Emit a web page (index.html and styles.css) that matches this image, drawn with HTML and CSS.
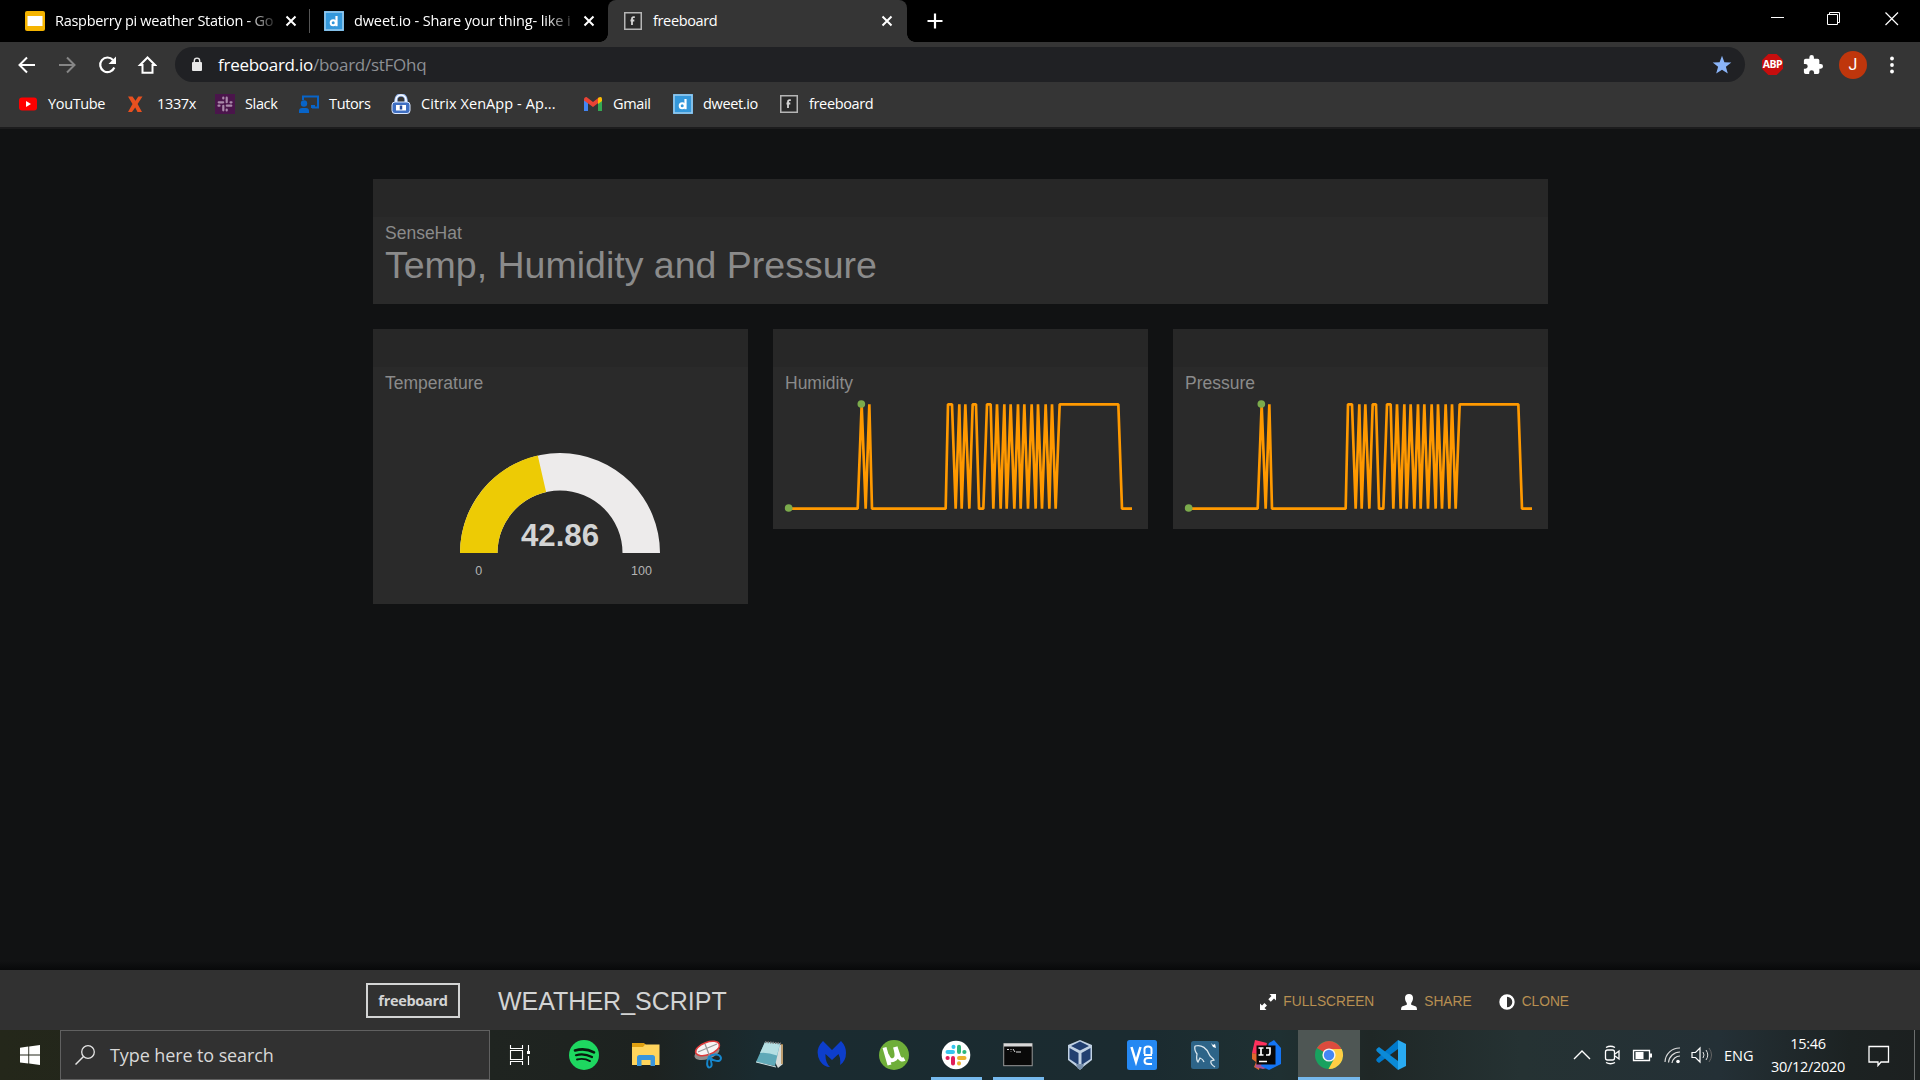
FILE: index.html
```html
<!DOCTYPE html>
<html lang="en">
<head>
<meta charset="utf-8">
<title>freeboard</title>
<link rel="stylesheet" href="styles.css">
</head>
<body>
<svg class="defs" aria-hidden="true">
  <symbol id="x" viewBox="0 0 12 12"><path d="M1.500 1.500l9 9M10.500 1.500l-9 9" stroke="#fff" stroke-width="2"/></symbol>
  <symbol id="fb" viewBox="0 0 18 18"><rect x=".75" y=".75" width="16.500" height="16.500" fill="#2a2a2a" stroke="#b5b5b5" stroke-width="1.500"/><path d="M8 13V7Q8 5.200 9.500 5.200h1.300M6.500 8.500h3.800" stroke="#d5d5d5" stroke-width="1.800" fill="none"/></symbol>
  <symbol id="dw" viewBox="0 0 20 20"><rect width="20" height="20" fill="#3498db"/><rect x="1" y="1" width="18" height="18" fill="none" stroke="#9dcbed" stroke-width="1.500"/><circle cx="9.200" cy="11.700" r="2.500" fill="none" stroke="#fff" stroke-width="2"/><path d="M12.500 5v10.200" stroke="#fff" stroke-width="2.200"/></symbol>
  <symbol id="spark" viewBox="0 0 1125 405"><g transform="translate(-39 -222)"><path d="M86 566H293L305 253 317 566 328 253 336 566H557L564 253H576L587 566 598 253 605 566 616 253 628 566 638 253H648L657 566H670L681 253H692L700 566 711 253 722 566 733 253 740 566 752 253 763 566 774 253 782 566 793 253 804 566 815 253 827 566 834 253 846 566 857 253 868 566 876 253 887 566 899 253H1075L1086 566H1116" fill="none" stroke="#ff9900" stroke-width="8" stroke-linejoin="bevel"/><circle cx="304" cy="252" r="11.500" fill="#7bab4c"/><circle cx="86" cy="564" r="11.500" fill="#7bab4c"/></g></symbol>
</svg>

<header class="browser">
  <div class="tabstrip">
    <div class="tab tab-one">
      <svg class="i20" viewBox="0 0 20 20"><rect width="20" height="20" rx="2" fill="#f5b400"/><rect x="2.500" y="5" width="15" height="10" fill="#fff"/></svg>
      <span class="title">Raspberry pi weather Station - Go</span>
      <svg class="close"><use href="#x"/></svg>
    </div>
    <div class="tab tab-two">
      <svg class="i20"><use href="#dw"/></svg>
      <span class="title">dweet.io - Share your thing- like i</span>
      <svg class="close"><use href="#x"/></svg>
    </div>
    <div class="tab active">
      <svg class="i18"><use href="#fb"/></svg>
      <span class="title">freeboard</span>
      <svg class="close"><use href="#x"/></svg>
    </div>
    <svg class="plus" viewBox="0 0 16 16"><path d="M8 .5v15M.5 8h15" stroke="#fff" stroke-width="2.200"/></svg>
    <div class="window-controls">
      <svg viewBox="0 0 14 14"><path d="M0 5.500h13" stroke="#fff"/></svg>
      <svg viewBox="0 0 14 14"><path d="M.5 2.500h10v10H.5zM2.500 2V.5h10v10H11" fill="none" stroke="#fff"/></svg>
      <svg viewBox="0 0 14 14"><path d="M.5.5l12.500 12.500M13 .5L.5 13" stroke="#fff" stroke-width="1.200"/></svg>
    </div>
  </div>
  <div class="toolbar">
    <div class="nav">
      <svg viewBox="0 0 20 20"><path d="M18 10H3M10 2.500L2.500 10l7.500 7.500" fill="none" stroke="#fff" stroke-width="2"/></svg>
      <svg viewBox="0 0 20 20"><path d="M2 10h15M10 2.500l7.500 7.500-7.500 7.500" fill="none" stroke="#868686" stroke-width="2"/></svg>
      <svg viewBox="0 0 20 20"><path d="M17.300 12.500A7.300 7.300 0 1 1 16 5" fill="none" stroke="#fff" stroke-width="2.200"/><path d="M19 1.500v7.500h-7.500z" fill="#fff"/></svg>
      <svg viewBox="0 0 20 20"><path d="M10.500 2.500L3 10h2.500v7.800h10V10H18z" fill="none" stroke="#fff" stroke-width="2"/></svg>
    </div>
    <div class="omnibox">
      <svg class="lock" viewBox="0 0 12 15"><rect x="1" y="5" width="10" height="9" rx="1" fill="#e8e8e8"/><path d="M3.300 6V3.800a2.700 2.700 0 0 1 5.400 0V6" fill="none" stroke="#e8e8e8" stroke-width="1.400"/></svg>
      <span class="url">freeboard.io<i>/board/stFOhq</i></span>
      <svg class="i20 star" viewBox="0 0 20 20"><path d="M10 .8l2.400 6.400 6.900.3-5.400 4.300 1.900 6.700L10 14.700l-5.800 3.800 1.900-6.700L.7 7.500l6.900-.3z" fill="#8ab4f8"/></svg>
    </div>
    <div class="extensions">
      <span class="abp">ABP</span>
      <svg class="i20" viewBox="1 1 22 22"><path d="M20.500 11H19V7a2 2 0 0 0-2-2h-4V3.500a2.500 2.500 0 0 0-5 0V5H4a2 2 0 0 0-2 2v3.800h1.500a2.700 2.700 0 0 1 0 5.400H2V20a2 2 0 0 0 2 2h3.800v-1.500a2.700 2.700 0 0 1 5.400 0V22H17a2 2 0 0 0 2-2v-4h1.500a2.500 2.500 0 0 0 0-5z" fill="#fff"/></svg>
      <span class="avatar">J</span>
      <svg class="i20" viewBox="0 0 20 20"><g fill="#fff"><circle cx="10" cy="3.500" r="1.900"/><circle cx="10" cy="10" r="1.900"/><circle cx="10" cy="16.500" r="1.900"/></g></svg>
    </div>
  </div>
  <nav class="bookmarks">
    <a><svg viewBox="0 0 20 20"><rect x="1" y="3.500" width="18" height="13" rx="3" fill="#f00"/><path d="M8 7l5 3-5 3z" fill="#fff"/></svg>YouTube</a>
    <a><svg viewBox="0 0 20 20"><path d="M1 2.500h4.500l3 4.200 2.800-4.200H15.500L10.600 10l4.400 8h-4.500l-2.300-4.500L5 18H1l4.500-8z" fill="#e8501f"/></svg>1337x</a>
    <a><svg viewBox="0 0 20 20"><rect width="20" height="20" fill="#4a154b"/><g stroke="#a98aaa" stroke-width="2.200" stroke-linecap="round"><path d="M3.700 8.300h4.500M8.300 3.500v1M11.700 3.700v4.500M16.500 8.300h-1M16.300 11.700h-4.500M11.700 16.500v-1M8.300 16.300v-4.500M3.500 11.700h1"/></g></svg>Slack</a>
    <a><svg viewBox="0 0 20 20"><path d="M4 6V2.500h15v11h-6" fill="none" stroke="#0864c8" stroke-width="2"/><circle cx="5" cy="9.500" r="3.200" fill="#0864c8"/><path d="M0 19v-2q0-3 3-3h4q3 0 3 3v2z" fill="#0864c8"/><path d="M12 11h4v3h-4z" fill="#0864c8"/></svg>Tutors</a>
    <a class="citrix"><svg viewBox="0 0 20 20"><path d="M5 9V6a5 5 0 0 1 10 0v3" fill="none" stroke="#8eaee4" stroke-width="3.500"/><path d="M5 9V6a5 5 0 0 1 10 0v3" fill="none" stroke="#fff" stroke-width="1.600"/><rect x="1" y="8" width="18" height="11.500" rx="3" fill="#3f6fc2" stroke="#dbe8ff"/><path d="M5 11h10v5.500H5z" fill="#fff"/><path d="M10 11.500v4" stroke="#244a9b" stroke-width="2.500"/></svg>Citrix XenApp - Ap...</a>
    <a><svg viewBox="0 0 20 20"><path d="M1 5v12h4V9z" fill="#4285f4"/><path d="M15 9v8h4V5z" fill="#34a853"/><path d="M1 5.500Q1 3 3.500 3L10 8l6.500-5v5L10 13 1 6.500z" fill="#ea4335"/><path d="M15 4q4-2.500 4 1v2l-4 3z" fill="#fbbc04"/></svg>Gmail</a>
    <a><svg><use href="#dw"/></svg>dweet.io</a>
    <a><svg class="small"><use href="#fb"/></svg>freeboard</a>
  </nav>
</header>

<main class="board">
  <section class="panel wide">
    <div class="panel-head"></div>
    <h2>SenseHat</h2>
    <p class="headline">Temp, Humidity and Pressure</p>
  </section>
  <section class="panel tall">
    <div class="panel-head"></div>
    <h2>Temperature</h2>
    <svg class="gauge" viewBox="0 0 375 180">
      <path d="M87 119A100 100 0 0 1 287 119H249.500A62.500 62.500 0 0 0 124.500 119z" fill="#edebeb"/>
      <path d="M87 119A100 100 0 0 1 164.760 21.500L173.100 58.060A62.500 62.500 0 0 0 124.500 119z" fill="#edcb05"/>
      <text x="187" y="112" class="gauge-value">42.86</text>
      <text x="105.700" y="141" class="gauge-limit">0</text>
      <text x="268.500" y="141" class="gauge-limit">100</text>
    </svg>
  </section>
  <section class="panel chart">
    <div class="panel-head"></div>
    <h2>Humidity</h2>
    <svg class="spark"><use href="#spark"/></svg>
  </section>
  <section class="panel chart">
    <div class="panel-head"></div>
    <h2>Pressure</h2>
    <svg class="spark"><use href="#spark"/></svg>
  </section>
</main>

<footer class="board-bar">
  <span class="logo">freeboard</span>
  <h1>WEATHER_SCRIPT</h1>
  <div class="actions">
    <a><svg viewBox="0 0 16 16"><path d="M9.500 0H16v6.500l-2-2-3.200 3.200-2.500-2.500L11.500 2zM0 9.500l2 2 2.500-2.500L7 11.500 4.500 14l2 2H0z" fill="#fff"/></svg>FULLSCREEN</a>
    <a><svg viewBox="0 0 16 16"><path d="M8 0C5.500 0 4 1.500 4 4c0 2 .7 3.800 1.800 5v1.800L1 12.500Q0 13 0 16h16q0-3-1-3.500l-4.800-1.700V9C11.300 7.800 12 6 12 4c0-2.500-1.500-4-4-4z" fill="#fff"/></svg>SHARE</a>
    <a><svg viewBox="0 0 16 16"><circle cx="8" cy="8" r="6.500" fill="none" stroke="#fff" stroke-width="2.400"/><path d="M8 2v12A6 6 0 0 1 8 2z" fill="#fff"/></svg>CLONE</a>
  </div>
</footer>

<div class="taskbar">
  <div class="start"><svg viewBox="0 0 20 20"><path d="M0 2.700L8.300 1.500v8H0zM9.200 1.400L20 0v9.500H9.200zM0 10.500h8.300v8L0 17.400zM9.200 10.500H20V20L9.200 18.600z" fill="#fff"/></svg></div>
  <div class="search"><svg viewBox="0 0 20 20"><circle cx="13" cy="7" r="6.300" fill="none" stroke="#e5e5e5" stroke-width="1.300"/><path d="M8.500 11.500L.5 19.500" stroke="#e5e5e5" stroke-width="1.500"/></svg><span>Type here to search</span></div>
  <div class="apps">
    <div><svg viewBox="0 0 30 30"><path d="M5.500 5v3.500h12V5M5.500 10.500h12v9h-12zM5.500 25v-3.500h12V25M23.500 5v6M23.500 16v9" fill="none" stroke="#fff" stroke-width="1.100"/><path d="M22 11h3v3h-3z" fill="#fff"/></svg></div>
    <div class="nudge"><svg viewBox="0 0 30 30"><circle cx="15" cy="15" r="15" fill="#1ed760"/><g fill="none" stroke="#08180d" stroke-linecap="round"><path d="M6 10.500q10-3 19 1.800" stroke-width="2.600"/><path d="M7 15.200q8-2.300 16 1.800" stroke-width="2.200"/><path d="M8 19.500q7-1.700 13 1.600" stroke-width="1.900"/></g></svg></div>
    <div class="nudge"><svg viewBox="0 0 30 30"><path d="M1 3h12l2 2h-1l-1 3H1z" fill="#e0a010"/><path d="M1 7h11l2-2.500h14.500V25H1z" fill="#ffd45c"/><path d="M6 26V17.500Q6 15 8.500 15h13q2.500 0 2.500 2.500V26h-4.500v-6h-9v6z" fill="#3995dc"/></svg></div>
    <div class="nudge"><svg viewBox="0 0 30 30"><ellipse cx="14" cy="13" rx="13" ry="6" transform="rotate(-18 14 13)" fill="#8d8d8d"/><ellipse cx="14.500" cy="8.500" rx="12.500" ry="6.200" transform="rotate(-20 14.500 8.500)" fill="#f7f4f4" stroke="#df3a3a" stroke-width="1.500"/><path d="M12 4l5 13M5 12l19-8" stroke="#999" stroke-width="1.300"/><path d="M16 17c-3 5-2 10 0 10.500 4 0 3-6 0-10.500zm0 0c4-4 11-3 12 1 0 5-8 3-12-1z" fill="none" stroke="#1687cd" stroke-width="2"/></svg></div>
    <div><svg viewBox="0 0 30 30"><path d="M10 2l18 3v19l-5 4z" fill="#d7dcd9"/><path d="M10 2l15 1.500-5 22.500-19-4z" fill="#5fa9b8"/><path d="M10 2l15 1.500-3 12Q12 12 5 13z" fill="#b5dfe3"/><path d="M27 4v20" stroke="#b58a4c" stroke-width="1.500"/><path d="M1 22l20 5" stroke="#d0e5e7"/><path d="M10 2l16 1.500" stroke="#777" stroke-width="2" stroke-dasharray="1.500 1"/></svg></div>
    <div><svg viewBox="0 0 30 30"><path d="M6 1l9 9 9-9q5 5 5 12 0 8-6 12 1-6-1.500-11L15 20l-6.500-6Q8 22 13 27q-6 0-10-6Q-3 10 6 1z" fill="#0d3ecc"/></svg></div>
    <div><svg viewBox="0 0 30 30"><circle cx="15" cy="15" r="15" fill="#6fae39"/><path d="M5.500 7.500l5 17.500M8 15q3 8 8 4 3-2 0-12M16.500 7l3 9q2 5 6 3" fill="none" stroke="#fff" stroke-width="4"/></svg></div>
    <div class="running"><svg viewBox="0 0 30 30"><circle cx="15" cy="15" r="14.300" fill="#fff"/><g stroke-width="4" stroke-linecap="round"><path d="M6.500 12H12M12.500 6.800v.2" stroke="#36c5f0"/><path d="M18 6.800V12M23.500 12h-.2" stroke="#2eb67d"/><path d="M12 18v5.500M6.500 18h.2" stroke="#e01e5a"/><path d="M18 18h5.500M18 23.500v-.2" stroke="#ecb22e"/></g></svg></div>
    <div class="running"><svg viewBox="0 0 30 30"><rect x=".7" y="3.700" width="28.500" height="22" fill="#090909" stroke="#999"/><path d="M1 5h28" stroke="#d8d8d8" stroke-width="3"/><path d="M4 9.500h2M8 9v1M8 11.500v.5M10 9l2 3M13 12h5" stroke="#ddd"/></svg></div>
    <div><svg viewBox="0 0 30 30"><path d="M15 0l12 5v15l-9 7-3 3-3-3-9-7V5z" fill="#c0d1e3"/><path d="M15 1.500L24 6l-9 4.500L6 6z" fill="#213f70"/><path d="M4.500 8L13.500 13v12l-9-6z" fill="#213f70"/><path d="M25.500 8L16.500 13v12l9-6z" fill="#213f70"/><path d="M11 24h8l-2 5h-4z" fill="#7890ac"/></svg></div>
    <div><svg viewBox="0 0 30 30"><rect width="30" height="30" rx="2.500" fill="#2588f2"/><path d="M4.500 7l4.500 15 4.500-15" fill="none" stroke="#fff" stroke-width="2.500"/><path d="M17.500 14V9q0-2.500 3.500-2.500T24.500 9v5M17 15h8M25 18h-4q-3.500 0-3.500 3t3.500 3h4" fill="none" stroke="#fff" stroke-width="2"/></svg></div>
    <div><svg viewBox="0 0 30 30"><rect x="1" y="1" width="28" height="28" rx="2.500" fill="#2d6488"/><path d="M5 6c7-2 12 3 14 8 1 3 4 4 5 6l-3 1q-1 3 4 6M5 6q-1 4 2 8-1 6 1 8l2-4q3 1 4 4" fill="none" stroke="#d8e5ec" stroke-width="1.300"/><path d="M21 3l2 2 2-1 1 4-3-1z" fill="#fff"/></svg></div>
    <div><svg viewBox="0 0 30 30"><path d="M3 0l12 3-3 13-12-3z" fill="#fe315d"/><path d="M0 13l10 2-3 15-5-3 2-5-4-3z" fill="#e1682c"/><path d="M3 27l3-7 13 7-8 2z" fill="#a6529a"/><path d="M17 3l5-3 7 8v16l-12 6-8-4z" fill="#1475f4"/><rect x="4.500" y="5.500" width="19" height="19" fill="#080808"/><path d="M6.500 8h5M9 8v7M6.500 15h5M14 8h4v5q0 2-2 2h-2M7 21.500h8" fill="none" stroke="#fff" stroke-width="1.700"/></svg></div>
    <div class="running current"><svg viewBox="0 0 30 30"><circle cx="15" cy="15" r="14" fill="#19a15f"/><path d="M15 15L2.900 8A14 14 0 0 1 27.100 8L27 9H15z" fill="#dc4b3e"/><path d="M15 9h12.700A14 14 0 0 1 14.500 29L20.500 18z" fill="#ffce44"/><circle cx="15" cy="15" r="6.600" fill="#f4f4f4"/><circle cx="15" cy="15" r="5.200" fill="#4486f4"/></svg></div>
    <div><svg viewBox="0 0 30 30"><path d="M22 0L1 18.500Q-.5 20 1 21.500l2 1.500L22 9z" fill="#007acc"/><path d="M22 30L1 11.500Q-.5 10 1 8.500L3 7l19 14z" fill="#0b8ad7"/><path d="M22 0l8 4v22l-8 4z" fill="#29aaf2"/></svg></div>
  </div>
  <div class="tray">
    <svg viewBox="0 0 22 22"><path d="M3 15l8-8 8 8" fill="none" stroke="#fff" stroke-width="1.400"/></svg>
    <svg viewBox="0 0 22 22"><rect x="4.500" y="6" width="9" height="10" rx="2" fill="none" stroke="#fff" stroke-width="1.300"/><path d="M14 10l4-3v8l-4-3M5 3.500q4.500-2.500 9 0M5 18.500q4.500 2.500 9 0" fill="none" stroke="#fff" stroke-width="1.300"/></svg>
    <svg viewBox="0 0 22 22"><path d="M2.500 6.500h16v10h-16z" fill="none" stroke="#fff" stroke-width="1.300"/><path d="M4.500 8h8v7h-8zM19 9.500h2v4h-2z" fill="#fff"/></svg>
    <svg viewBox="0 0 22 22"><g fill="none" stroke="#ddd" stroke-width="1.200"><path d="M4 18A14.500 14.500 0 0 1 19 4M7.500 18.500A11.500 11.500 0 0 1 19 8M11 19a8 8 0 0 1 8-7"/></g><circle cx="17" cy="17.500" r="1.800" fill="#fff"/></svg>
    <svg viewBox="0 0 22 22"><path d="M1 8.500h3.500L9 4v14l-4.500-4.500H1z" fill="none" stroke="#fff" stroke-width="1.200"/><path d="M12 8q2 3 0 6M15 6q3.500 5 0 10" fill="none" stroke="#ddd"/><path d="M18 4q5 7 0 14" fill="none" stroke="#666"/></svg>
    <span class="lang">ENG</span>
  </div>
  <div class="clock"><span>15:46</span><span>30/12/2020</span></div>
  <svg class="notice" viewBox="0 0 22 22"><path d="M1 1.500h19.500v15.500H13l-3 3.500V17H1z" fill="none" stroke="#fff" stroke-width="1.300"/></svg>
  <div class="peek"></div>
</div>
</body>
</html>
```
FILE: styles.css
```css
* { box-sizing: border-box; }
body {
  margin: 0;
  width: 1920px;
  height: 1080px;
  overflow: hidden;
  display: flex;
  flex-direction: column;
  background: #111213;
  color: #fff;
  font-family: "Open Sans", "Noto Sans", sans-serif;
}
svg { display: block; flex: none; }
h1, h2, p { margin: 0; font-weight: 400; }
.defs { position: absolute; width: 0; height: 0; }
.i20 { width: 20px; height: 20px; }
.i18 { width: 18px; height: 18px; }

.browser { height: 129px; background: #353535; border-bottom: 2px solid #1c1c1d; }
.tabstrip { height: 42px; display: flex; background: #000; }
.tab { height: 42px; display: flex; align-items: center; font-size: 14.5px; letter-spacing: -0.35px; }
.tab .title { flex: 1; height: 24px; line-height: 23px; margin-left: 10px; white-space: nowrap; }
.close { width: 12px; height: 12px; }
.tab-one { width: 310px; padding: 0 14px 0 25px; position: relative; letter-spacing: -0.28px; }
.tab-one::after { content: ""; position: absolute; right: 0; top: 9px; width: 1px; height: 24px; background: #555; }
.tab-two { width: 298px; padding: 0 14px; letter-spacing: -0.12px; }
.tab-one .title, .tab-two .title {
  margin-right: 12px;
  -webkit-mask-image: linear-gradient(90deg, #000 88%, transparent 103%);
  mask-image: linear-gradient(90deg, #000 88%, transparent 103%);
}
.active { position: relative; width: 299px; padding: 0 14px 0 16px; background: #353535; border-radius: 8px 8px 0 0; }
.active .title { margin-left: 11px; }
.active::before, .active::after {
  content: "";
  position: absolute;
  bottom: 0;
  width: 8px;
  height: 8px;
}
.active::before { left: -8px; background: radial-gradient(circle at 0 0, transparent 7.5px, #353535 8px); }
.active::after { right: -8px; background: radial-gradient(circle at 100% 0, transparent 7.5px, #353535 8px); }
.plus { width: 16px; height: 16px; margin: 13px 0 0 20px; }
.window-controls { margin-left: auto; padding: 12px 21px 0 0; display: flex; gap: 43px; }
.window-controls svg { width: 14px; height: 14px; }
.window-controls svg:nth-child(2) { margin: 0 1px 0 -1px; }

.toolbar { height: 46px; padding: 5px 0 6px 17px; display: flex; align-items: center; }
.nav { display: flex; gap: 20px; width: 158px; }
.nav svg { width: 20px; height: 20px; }
.omnibox { width: 1570px; height: 35px; border-radius: 18px; background: #202124; display: flex; align-items: center; padding: 0 13px 0 16px; }
.lock { width: 12px; height: 15px; }
.url { margin-left: 15px; font-size: 17px; letter-spacing: -0.27px; line-height: 24px; }
.url i { font-style: normal; color: #8d9094; }
.star { margin-left: auto; }
.extensions { display: flex; align-items: center; margin-left: 17px; }
.abp { width: 21px; height: 21px; margin-right: 20px; background: #c70d0d; clip-path: polygon(30% 0, 70% 0, 100% 30%, 100% 70%, 70% 100%, 30% 100%, 0 70%, 0 30%); font: 700 10.5px/20px "Open Sans", sans-serif; text-align: center; letter-spacing: -0.5px; }
.avatar { width: 28px; height: 28px; border-radius: 50%; background: #bf360c; margin: 0 15px 0 16px; font: 400 16px/28px Roboto, sans-serif; text-align: center; }

.bookmarks { height: 34px; padding-left: 18px; display: grid; grid-template-columns: 109px 88px 84px 92px 192px 90px 107px 120px; align-items: center; }
.bookmarks a { display: flex; align-items: center; gap: 10px; font-size: 14.500px; line-height: 20px; letter-spacing: -0.35px; white-space: nowrap; padding-bottom: 2px; }
.bookmarks svg { width: 20px; height: 20px; }
.bookmarks .small { width: 18px; height: 18px; margin-right: 1px; }
.bookmarks .citrix { letter-spacing: 0.08px; }

.board {
  height: 841px;
  padding: 50px 0 0 373px;
  display: grid;
  grid-template-columns: repeat(3, 375px);
  grid-template-rows: 125px 275px;
  gap: 25px;
  align-items: start;
  font-family: "Liberation Sans", Arial, sans-serif;
  background: linear-gradient(#111213 832px, #08090a 841px);
}
.panel { background: #2a2a2a; }
.panel-head { height: 38px; background: #272727; }
.panel h2 { padding: 6px 12px 0; font-size: 17.5px; line-height: 20px; color: #8b8b8b; }
.wide { grid-column: 1 / -1; height: 125px; }
.tall { height: 275px; }
.chart { height: 200px; }
.headline { padding-left: 12px; font-size: 37.5px; line-height: 44px; color: #8b8b8b; }
.gauge { width: 375px; height: 180px; margin-top: 41px; }
.gauge-value { font-size: 31.25px; font-weight: 700; fill: #d3d4d4; text-anchor: middle; }
.gauge-limit { font-size: 12.5px; fill: #b3b3b3; text-anchor: middle; }
.spark { width: 375px; height: 135px; margin-top: 1px; }

.board-bar { height: 60px; padding: 0 351px 0 366px; display: flex; align-items: center; background: #313131; font-family: "Liberation Sans", Arial, sans-serif; }
.logo { width: 94px; height: 35px; border: 2px solid #d3d4d4; margin-top: 1px; color: #d3d4d4; font: 700 14.500px/31px "Open Sans", sans-serif; letter-spacing: -0.3px; text-align: center; }
.board-bar h1 { margin-left: 38px; padding-top: 2px; font-size: 25px; line-height: 30px; color: #d3d4d4; }
.actions { margin-left: auto; display: flex; gap: 27px; padding-top: 4px; font-size: 13.75px; line-height: 20px; color: #b88f51; }
.actions a { display: flex; align-items: center; gap: 7px; }
.actions svg { width: 16px; height: 16px; }

.taskbar { height: 50px; display: flex; background: linear-gradient(90deg, #24271a 0, #1f2420 490px, #1d2220 650px, #1a2b30 760px, #1b2b30 1150px, #1f3032 1280px, #1f2726 1370px, #253233 1520px, #243036 1720px, #1c2222 1850px, #1c2020 100%); }
.start { width: 60px; padding: 15px 20px; }
.start svg { width: 20px; height: 20px; }
.search { width: 430px; border: 1px solid #606060; background: #313131; display: flex; align-items: center; gap: 15px; padding-left: 14px; font-size: 18px; line-height: 24px; color: #d8d8d8; }
.search svg { width: 20px; height: 20px; }
.search span { letter-spacing: -0.1px; }
.apps { width: 932px; display: grid; grid-template-columns: repeat(15, 1fr); }
.apps div { display: flex; align-items: center; justify-content: center; position: relative; }
.apps svg { width: 30px; height: 30px; }
.apps div:first-child svg { margin-left: -2px; }
.nudge { padding-left: 2px; }
.running::after { content: ""; position: absolute; bottom: 0; left: 6px; right: 5px; height: 3px; background: #76b9ed; }
.current { background: #4e5654; }
.apps .current::after { left: 0; right: 0; }
.tray { margin-left: 149px; display: flex; align-items: center; gap: 8px; }
.tray svg { width: 22px; height: 22px; }
.lang { margin-left: 3px; font-size: 14.500px; letter-spacing: 0; }
.clock { width: 96px; margin-left: auto; margin-right: 12px; display: flex; flex-direction: column; padding-top: 3px; text-align: center; font-size: 14.500px; line-height: 22.500px; letter-spacing: -0.3px; }
.notice { width: 22px; height: 22px; margin: 15px 24px 0 0; }
.peek { width: 6px; border-left: 1px solid #6b6e6e; }
```
